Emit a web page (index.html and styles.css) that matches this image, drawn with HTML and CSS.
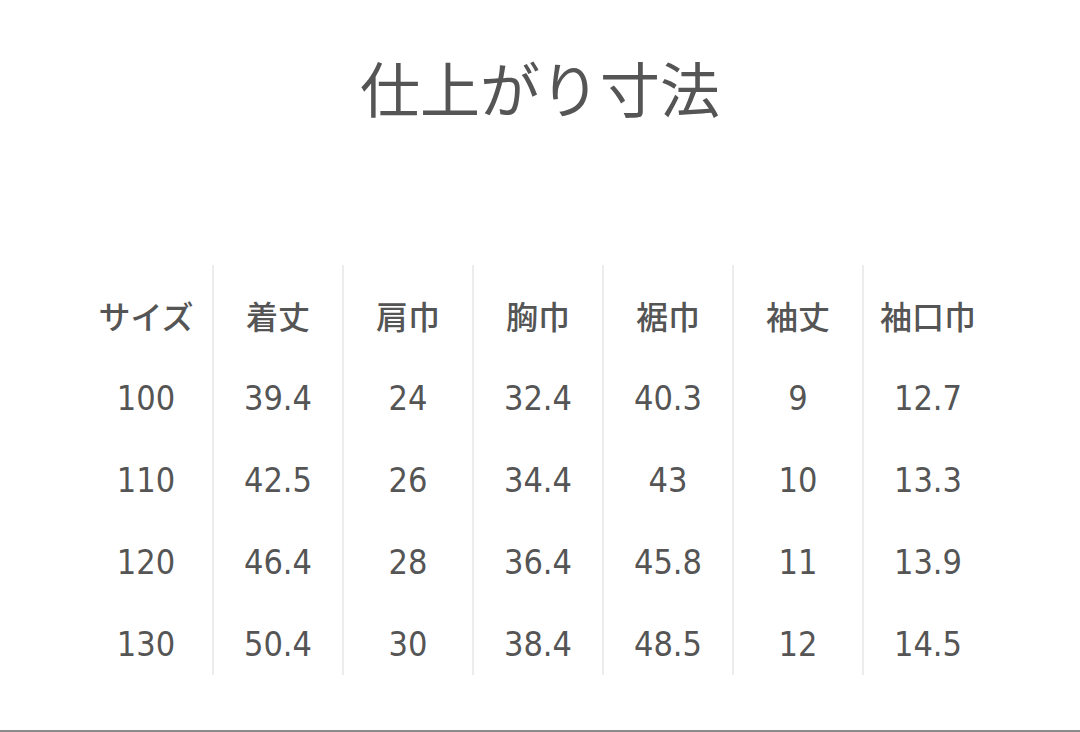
FILE: index.html
```html
<!DOCTYPE html>
<html lang="ja">
<head>
<meta charset="utf-8">
<title>仕上がり寸法</title>
<link rel="stylesheet" href="styles.css">
</head>
<body>
<div class="page">
  <h1 class="title">仕上がり寸法</h1>
  <div class="table">
    <div class="col first">
      <div class="cell head">サイズ</div>
      <div class="cell">100</div>
      <div class="cell">110</div>
      <div class="cell">120</div>
      <div class="cell">130</div>
    </div>
    <div class="col">
      <div class="cell head">着丈</div>
      <div class="cell">39.4</div>
      <div class="cell">42.5</div>
      <div class="cell">46.4</div>
      <div class="cell">50.4</div>
    </div>
    <div class="col">
      <div class="cell head">肩巾</div>
      <div class="cell">24</div>
      <div class="cell">26</div>
      <div class="cell">28</div>
      <div class="cell">30</div>
    </div>
    <div class="col">
      <div class="cell head">胸巾</div>
      <div class="cell">32.4</div>
      <div class="cell">34.4</div>
      <div class="cell">36.4</div>
      <div class="cell">38.4</div>
    </div>
    <div class="col">
      <div class="cell head">裾巾</div>
      <div class="cell">40.3</div>
      <div class="cell">43</div>
      <div class="cell">45.8</div>
      <div class="cell">48.5</div>
    </div>
    <div class="col">
      <div class="cell head">袖丈</div>
      <div class="cell">9</div>
      <div class="cell">10</div>
      <div class="cell">11</div>
      <div class="cell">12</div>
    </div>
    <div class="col">
      <div class="cell head">袖口巾</div>
      <div class="cell">12.7</div>
      <div class="cell">13.3</div>
      <div class="cell">13.9</div>
      <div class="cell">14.5</div>
    </div>
  </div>
</div>
</body>
</html>
```

FILE: styles.css
```css
html, body {
  margin: 0;
  padding: 0;
  background: #ffffff;
}
.page {
  box-sizing: border-box;
  width: 1080px;
  height: 732px;
  border-bottom: 2px solid #8a8a8a;
  overflow: hidden;
  color: #555555;
  font-family: "Noto Sans CJK JP", "Noto Sans", sans-serif;
}
.title {
  margin: 57px 0 0;
  height: 60px;
  line-height: 60px;
  font-size: 60px;
  font-weight: 400;
  text-align: center;
  padding-left: 0;
}
.table {
  display: flex;
  padding-left: 80px;
  margin-top: 148px;
}
.col {
  width: 130px;
  height: 410px;
  border-left: 2px solid #ececec;
  box-sizing: border-box;
  display: flex;
  flex-direction: column;
  padding-top: 9px;
}
.col.first {
  width: 132px;
  border-left: none;
}
.cell {
  flex: 0 0 82px;
  display: flex;
  align-items: center;
  justify-content: center;
  font-family: "DejaVu Sans Condensed", "DejaVu Sans", sans-serif;
  font-size: 34px;
  line-height: 1;
  color: #555555;
}
.cell.head {
  font-family: "Noto Sans CJK JP", sans-serif;
  font-size: 32px;
  font-weight: 500;
  padding-bottom: 1px;
}
```
